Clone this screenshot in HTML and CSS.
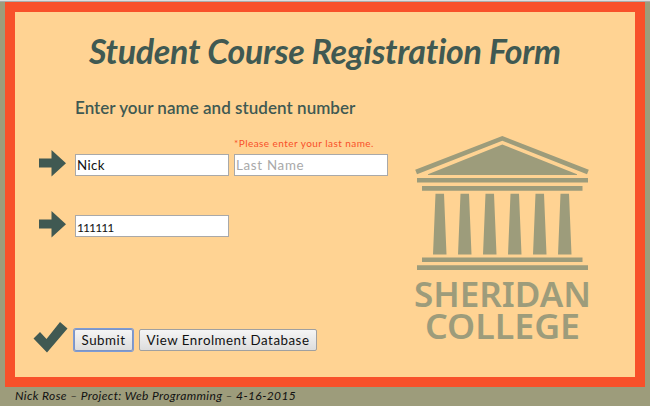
FILE: index.html
```html
<!DOCTYPE html>
<html lang="en">
<head>
<meta charset="utf-8">
<title>Student Course Registration Form</title>
<link rel="stylesheet" href="styles.css">
</head>
<body>
<main class="panel">
  <h1>Student Course Registration Form</h1>
  <div class="content">
    <form class="form">
      <h2>Enter your name and student number</h2>
      <p class="error">*Please enter your last name.</p>
      <div class="row">
        <svg class="arrow" viewBox="0 0 27 27"><path d="M0 8.500H12.500V0L27 13.200 12.500 26.500V17.500H0Z"/></svg>
        <input type="text" value="Nick" aria-label="First Name">
        <input type="text" placeholder="Last Name" aria-label="Last Name">
      </div>
      <div class="row number">
        <svg class="arrow" viewBox="0 0 27 27"><path d="M0 8.500H12.500V0L27 13.200 12.500 26.500V17.500H0Z"/></svg>
        <input type="text" value="111111" class="digits" aria-label="Student Number">
      </div>
      <div class="actions">
        <svg class="check" viewBox="0 0 35 32"><path d="M.5 17.500 7 11 13.500 18 27 1 34.500 7.500 14 31.500Z"/></svg>
        <button type="button" class="submit">Submit</button>
        <button type="button" class="view">View Enrolment Database</button>
      </div>
    </form>
    <svg class="logo" viewBox="0 0 176 217" role="img" aria-label="Sheridan College">
      <path d="M1.200 44.800 88.300 11 174.800 44.800 173 49.200 88.300 15.800 3 49.200Z"/>
      <path d="M14 49.200 88.300 19.500 163 49.200V50H14Z"/>
      <path d="M3 53H174V57.500H3ZM8 61H168.500V65.700H8ZM8 132.500H168.500V137H8ZM3 140.300H174V145H3Z"/>
      <path d="M21.500 68.700H30L32.500 129.500H19ZM46.500 68.700H55L57.500 129.500H44ZM71.500 68.700H80L82.500 129.500H69ZM96.500 68.700H105L107.500 129.500H94ZM121.500 68.700H130L132.500 129.500H119ZM146.500 68.700H155L157.500 129.500H144Z"/>
      <text x="0" y="182" textLength="177" lengthAdjust="spacingAndGlyphs">SHERIDAN</text>
      <text x="11" y="213.500" textLength="155" lengthAdjust="spacingAndGlyphs">COLLEGE</text>
    </svg>
  </div>
</main>
<footer>Nick Rose – Project: Web Programming – 4-16-2015</footer>
</body>
</html>
```
FILE: styles.css
```css
* { box-sizing: border-box; }
body {
  margin: 0;
  height: 406px;
  overflow: hidden;
  background: #9d9c7b;
  border-top: 1px solid #dedede;
  box-shadow: inset 0 1px #aaa;
  font-family: Lato, "Liberation Sans", sans-serif;
}
.panel {
  height: 385px;
  margin: 1px 5px 0;
  border: 10px solid #f8502a;
  background: #ffd393;
}
h1, h2, p { margin: 0; }
h1, h2, footer, .error, button { white-space: nowrap; }
h1 {
  height: 82px;
  padding: 18px 0 0 74px;
  color: #405952;
  font: italic 700 34px/42px Lato, sans-serif;
  letter-spacing: -.3px;
  font-variant-ligatures: none;
}
.content { display: flex; }
.form { width: 399px; padding-left: 24px; }
h2 {
  height: 30px;
  padding-left: 36px;
  color: #405952;
  font-size: 17px;
  font-weight: 600;
  line-height: 27px;
  letter-spacing: .04px;
}
.error {
  height: 24px;
  padding: 12px 0 0 195px;
  color: #f8502a;
  font-size: 10px;
  line-height: 14px;
  letter-spacing: .45px;
}
.row { display: flex; align-items: center; height: 34px; gap: 5px; }
.row .arrow { width: 27px; height: 27px; margin: -3px 4px 0 0; }
.number { margin-top: 27px; }
.arrow, .check { fill: #405952; display: block; flex: none; }
input {
  width: 154px;
  height: 22px;
  padding: 1px;
  border: 1px solid #a9a9a9;
  background: #fff;
  color: #111;
  font: 13.333px Lato, sans-serif;
  letter-spacing: .4px;
}
input::placeholder { color: #a9a9a9; opacity: 1; letter-spacing: .7px; }
.digits { letter-spacing: -.9px; font-size: 12px; padding-top: 3px; }
.actions { display: flex; align-items: center; margin: 80px 0 0 -6px; height: 34px; }
.check { width: 35px; height: 32px; margin: -6px 6px 0 0; }
button {
  height: 22px;
  padding: 0;
  border: 1px solid #a0a0a0;
  border-radius: 2px;
  background: linear-gradient(#f5f5f5, #ddd);
  color: #111;
  font: 13.333px Lato, sans-serif;
  letter-spacing: .5px;
}
.submit { width: 59px; border-color: #7d94c5; box-shadow: 0 0 0 1px #7d9bd5; }
.view { width: 178px; margin-left: 6px; }
.logo { width: 176px; height: 217px; margin-top: 31px; fill: #9d9c7b; overflow: visible; }
.logo text { font: 600 34px "Noto Sans", sans-serif; }
footer {
  padding-left: 15px;
  color: #111;
  font: italic 12px/18px Lato, sans-serif;
  letter-spacing: .38px;
}
```
